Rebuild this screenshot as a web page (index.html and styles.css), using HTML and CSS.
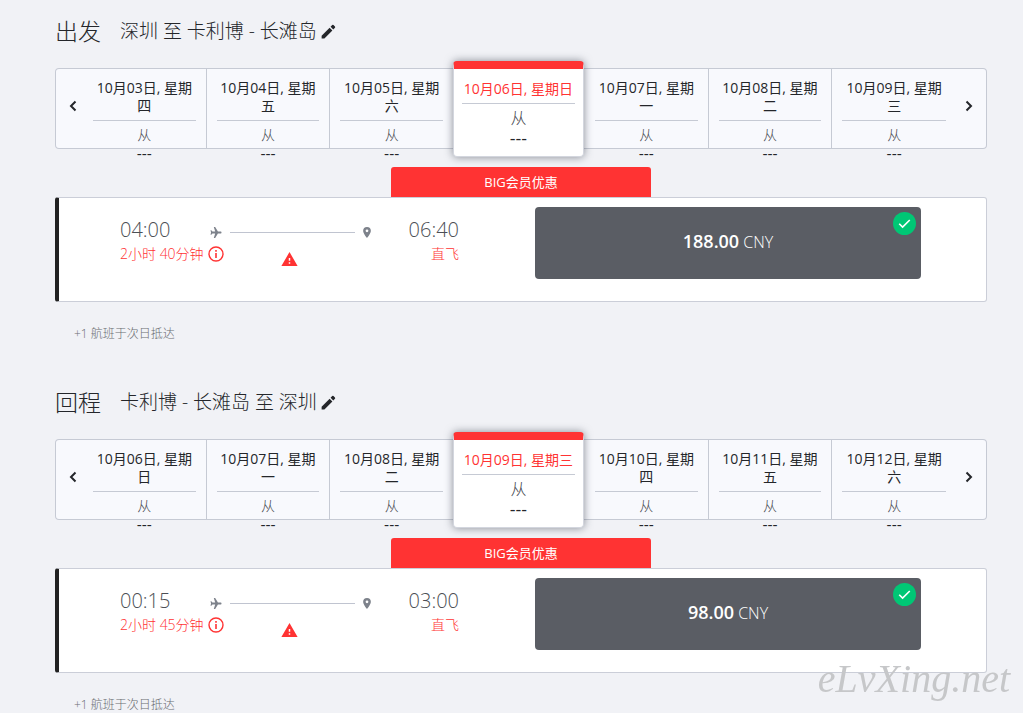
FILE: index.html
```html
<!DOCTYPE html>
<html lang="zh-CN">
<head>
<meta charset="utf-8">
<title>选择航班</title>
<link rel="stylesheet" href="styles.css">
</head>
<body>
<svg class="defs" aria-hidden="true">
  <symbol id="pencil" viewBox="0 0 24 24"><path d="M1 18.6V23h4.4L18.2 10.200l-4.400-4.400zM22.300 6.100a1.500 1.500 0 0 0 0-2.100l-2.300-2.300a1.500 1.500 0 0 0-2.100 0l-2.600 2.600 4.400 4.400z"/></symbol>
  <symbol id="left" viewBox="0 0 8 12"><path d="M6.500 1.500 2 6l4.500 4.500" fill="none" stroke="currentColor" stroke-width="2"/></symbol>
  <symbol id="right" viewBox="0 0 8 12"><path d="M1.500 1.500 6 6l-4.500 4.500" fill="none" stroke="currentColor" stroke-width="2"/></symbol>
  <symbol id="plane" viewBox="0 0 20 20"><path d="M20 10c0-1-.7-1.800-1.500-1.800H13.500L8.500 0H6l2.500 8.200H3.500L1.500 6H0l1 4-1 4h1.500l2-2.200h5L6 20h2.500l5-8.200h5c.8 0 1.500-.8 1.500-1.800z"/></symbol>
  <symbol id="pin" viewBox="0 0 14 20"><path fill-rule="evenodd" d="M7 0a7 7 0 0 0-7 7c0 5.200 7 13 7 13s7-7.800 7-13a7 7 0 0 0-7-7zm0 4.500a2.500 2.500 0 1 1 0 5 2.500 2.500 0 0 1 0-5z"/></symbol>
  <symbol id="info" viewBox="0 0 16 16"><circle cx="8" cy="8" r="7" fill="none" stroke="currentColor" stroke-width="1.400"/><path d="M7.200 7h1.600v5H7.200zM7.200 4h1.600v1.700H7.200z"/></symbol>
  <symbol id="warn" viewBox="0 0 22 19"><path fill-rule="evenodd" d="M0 19h22L11 0zM12 16h-2v-2h2zm0-4h-2V8h2z"/></symbol>
  <symbol id="check" viewBox="0 0 24 24"><circle cx="12" cy="12" r="12" fill="#00c775"/><path d="m6.500 12.300 3.500 3.500 7.500-7.500" fill="none" stroke="#fff" stroke-width="1.700"/></symbol>
</svg>
<main class="page">
  <section class="trip">
    <header class="trip-head">
      <h2 class="trip-title">出发</h2>
      <p class="trip-route">深圳 至 卡利博 - 长滩岛</p>
      <button class="edit" aria-label="修改"><svg class="icon-pencil"><use href="#pencil"/></svg></button>
    </header>
    <nav class="dates" aria-label="出发日期">
      <button class="arrow" aria-label="前一天"><svg class="icon-arrow"><use href="#left"/></svg></button>
      <button class="date"><span class="day">10月03日, 星期四</span><span class="from">从</span><span class="fare">---</span></button>
      <button class="date"><span class="day">10月04日, 星期五</span><span class="from">从</span><span class="fare">---</span></button>
      <button class="date"><span class="day">10月05日, 星期六</span><span class="from">从</span><span class="fare">---</span></button>
      <button class="date active" aria-current="date"><span class="day">10月06日, 星期日</span><span class="from">从</span><span class="fare">---</span></button>
      <button class="date"><span class="day">10月07日, 星期一</span><span class="from">从</span><span class="fare">---</span></button>
      <button class="date"><span class="day">10月08日, 星期二</span><span class="from">从</span><span class="fare">---</span></button>
      <button class="date"><span class="day">10月09日, 星期三</span><span class="from">从</span><span class="fare">---</span></button>
      <button class="arrow" aria-label="后一天"><svg class="icon-arrow"><use href="#right"/></svg></button>
    </nav>
    <div class="banner">BIG会员优惠</div>
    <article class="card">
      <div class="flight">
        <div class="times">
          <time class="time">04:00</time>
          <div class="path"><svg class="icon-plane"><use href="#plane"/></svg><span class="line"></span><svg class="icon-pin"><use href="#pin"/></svg></div>
          <time class="time">06:40</time>
        </div>
        <div class="details">
          <span class="duration">2小时 40分钟<svg class="icon-info"><use href="#info"/></svg></span>
          <svg class="icon-warn"><use href="#warn"/></svg>
          <span class="stops">直飞</span>
        </div>
      </div>
      <button class="price"><span><b class="amount">188.00</b> CNY</span><svg class="icon-check"><use href="#check"/></svg></button>
    </article>
    <p class="note">+1 航班于次日抵达</p>
  </section>
  <section class="trip">
    <header class="trip-head">
      <h2 class="trip-title">回程</h2>
      <p class="trip-route">卡利博 - 长滩岛 至 深圳</p>
      <button class="edit" aria-label="修改"><svg class="icon-pencil"><use href="#pencil"/></svg></button>
    </header>
    <nav class="dates" aria-label="回程日期">
      <button class="arrow" aria-label="前一天"><svg class="icon-arrow"><use href="#left"/></svg></button>
      <button class="date"><span class="day">10月06日, 星期日</span><span class="from">从</span><span class="fare">---</span></button>
      <button class="date"><span class="day">10月07日, 星期一</span><span class="from">从</span><span class="fare">---</span></button>
      <button class="date"><span class="day">10月08日, 星期二</span><span class="from">从</span><span class="fare">---</span></button>
      <button class="date active" aria-current="date"><span class="day">10月09日, 星期三</span><span class="from">从</span><span class="fare">---</span></button>
      <button class="date"><span class="day">10月10日, 星期四</span><span class="from">从</span><span class="fare">---</span></button>
      <button class="date"><span class="day">10月11日, 星期五</span><span class="from">从</span><span class="fare">---</span></button>
      <button class="date"><span class="day">10月12日, 星期六</span><span class="from">从</span><span class="fare">---</span></button>
      <button class="arrow" aria-label="后一天"><svg class="icon-arrow"><use href="#right"/></svg></button>
    </nav>
    <div class="banner">BIG会员优惠</div>
    <article class="card">
      <div class="flight">
        <div class="times">
          <time class="time">00:15</time>
          <div class="path"><svg class="icon-plane"><use href="#plane"/></svg><span class="line"></span><svg class="icon-pin"><use href="#pin"/></svg></div>
          <time class="time">03:00</time>
        </div>
        <div class="details">
          <span class="duration">2小时 45分钟<svg class="icon-info"><use href="#info"/></svg></span>
          <svg class="icon-warn"><use href="#warn"/></svg>
          <span class="stops">直飞</span>
        </div>
      </div>
      <button class="price"><span><b class="amount">98.00</b> CNY</span><svg class="icon-check"><use href="#check"/></svg></button>
    </article>
    <p class="note">+1 航班于次日抵达</p>
  </section>
</main>
<div class="watermark">eLvXing.net</div>
</body>
</html>
```
FILE: styles.css
```css
* { box-sizing: border-box; }
html { background: #f1f2f6; scrollbar-width: none; }
body {
  margin: 0;
  color: #24262a;
  font-family: "Open Sans", "Noto Sans CJK SC", sans-serif;
  font-size: 14px;
}
button {
  margin: 0;
  padding: 0;
  border: 0;
  background: none;
  color: inherit;
  font: inherit;
  cursor: pointer;
}
svg { display: block; fill: currentColor; flex: none; }
.defs { display: none; }
.page { padding: 17px 36px 0 55px; }
.trip + .trip { margin-top: 46px; }

.trip-head { display: flex; align-items: center; margin-bottom: 23px; }
.trip-title { margin: 0 19px 0 0; font-size: 23px; line-height: 28px; font-weight: 300; }
.trip-route { margin: 0 4px 0 0; font-size: 19px; line-height: 28px; font-weight: 300; }
.icon-pencil { width: 15px; height: 15px; }

.dates {
  display: grid;
  grid-template-columns: 28px repeat(3, 1fr) 131px repeat(3, 1fr) 31px;
  border-radius: 4px;
  box-shadow: inset 0 0 0 1px #c6cad4;
  background: #f8f9fd;
}
.arrow { display: flex; align-items: center; justify-content: center; padding: 0 0 6px 7px; }
.arrow:last-child { padding: 0 4px 6px 0; }
.icon-arrow { width: 8px; height: 12px; }
.date {
  display: flex;
  flex-direction: column;
  padding: 11px 10px 0;
  border-right: 1px solid #c6cad4;
  line-height: 18px;
  text-align: center;
}
.date:nth-last-child(2) { border-right: 0; }
.day { padding-bottom: 5px; border-bottom: 1px solid #c6cad4; }
.from { padding-top: 5px; color: #45484e; font-weight: 300; }
.fare { margin-bottom: -14px; padding-top: 1px; font-family: "DejaVu Sans", sans-serif; }
.active {
  margin: -7px 1px -8px -1px;
  padding: 11px 8px 7px;
  border: 1px solid #d3d6de;
  border-top: 8px solid #ff3333;
  border-radius: 4px;
  background: #fff;
  box-shadow: 0 0 8px rgba(60, 66, 80, 0.6);
  font-size: 16px;
  line-height: 20px;
}
.active .day { color: #ff3333; font-size: 14px; line-height: 18px; white-space: nowrap; }
.active .from { padding-top: 4px; }
.active .fare { margin-bottom: 0; }

.banner {
  width: 28%;
  margin: 18px auto 0;
  border-radius: 3px 3px 0 0;
  background: #ff3333;
  color: #fff;
  font-size: 13px;
  font-weight: 400;
  line-height: 30px;
  text-align: center;
}
.card {
  display: grid;
  grid-template-columns: 339fr 386fr;
  gap: 76px;
  align-items: start;
  padding: 9px 65px 22px 61px;
  border: 1px solid #cbced8;
  border-left: 4px solid #222;
  border-radius: 3px;
  background: #fff;
}
.flight { padding-top: 9px; }
.times { display: flex; align-items: center; justify-content: space-between; }
.time { color: #4c4f55; font-size: 20px; font-weight: 300; line-height: 28px; }
.path { display: flex; align-items: center; gap: 8px; flex: 1; margin: 4px 38px 0 40px; color: #7d828b; }
.icon-plane { width: 12px; height: 11px; }
.line { flex: 1; height: 1px; background: #c0c4d0; }
.icon-pin { width: 8px; height: 11px; }
.details {
  display: grid;
  grid-template-columns: 1fr auto 1fr;
  color: #ff3333;
  font-weight: 300;
  line-height: 20px;
}
.duration { display: flex; align-items: center; gap: 4px; white-space: nowrap; }
.icon-info { width: 16px; height: 16px; }
.icon-warn { width: 17px; height: 14px; align-self: end; margin-bottom: -2px; }
.stops { text-align: right; }
.price {
  position: relative;
  padding: 22px 10px 25px;
  border-radius: 4px;
  background: #5a5d64;
  color: #fff;
  font-size: 16px;
  font-weight: 300;
  line-height: 24px;
}
.amount { font-size: 18px; font-weight: 600; }
.icon-check { position: absolute; top: 5px; right: 5px; width: 23px; height: 23px; }
.note { margin: 24px 19px 0; color: #6a6d72; font-size: 12px; font-weight: 300; line-height: 16px; }
.watermark {
  position: fixed;
  right: 13px;
  bottom: 12px;
  color: #c6c7c9;
  font-family: "Liberation Serif", serif;
  font-size: 40px;
  font-style: italic;
  line-height: 44px;
}
```
